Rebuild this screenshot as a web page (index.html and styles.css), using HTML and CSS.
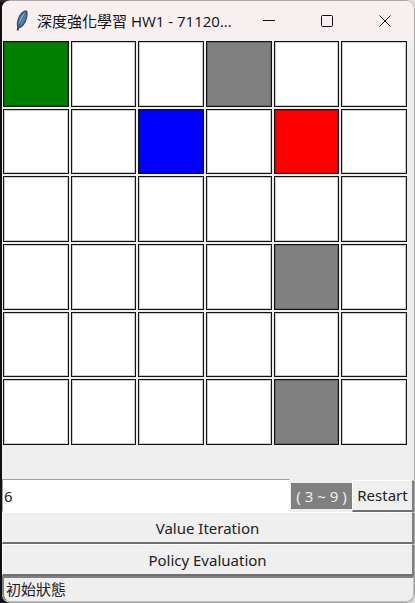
FILE: index.html
```html
<!DOCTYPE html>
<html lang="zh-Hant">
<head>
<meta charset="utf-8">
<title>深度強化學習 HW1</title>
<link rel="stylesheet" href="styles.css">
</head>
<body>
<main class="window">
  <header class="titlebar">
    <svg class="feather" viewBox="0 0 14 22" aria-hidden="true">
      <path d="M2.500 20.500 4 15" fill="none" stroke="#222" stroke-width="1.600"/>
      <path d="M3 17.500C1.500 13 3.500 7 6.500 3.500 8.500 1.500 10.500 .8 11.500 1.200c1 2 .4 7-1.700 11C8 15.500 5.500 18 3 17.500z" fill="#4482c6" stroke="#4a4c50" stroke-width="1.400"/>
      <path d="M4 13.500C4.500 9 7 5 10.500 2.200 9.500 6 7.500 10 5 14z" fill="#7db4ea"/>
      <path d="M3.500 17C5 12.500 8 7 11 2.500" fill="none" stroke="#274567" stroke-width=".7"/>
    </svg>
    <h1 class="title">深度強化學習 HW1 - 71120...</h1>
    <button class="control" type="button" aria-label="Minimize">
      <svg viewBox="0 0 12 12"><path d="M0 5.500h12"/></svg>
    </button>
    <button class="control" type="button" aria-label="Maximize">
      <svg viewBox="0 0 12 12"><rect x=".5" y=".5" width="11" height="11" rx="1"/></svg>
    </button>
    <button class="control" type="button" aria-label="Close">
      <svg viewBox="0 0 12 12"><path d="M.5.5l11 11M11.500.5l-11 11"/></svg>
    </button>
  </header>
  <section class="board">
    <i class="cell start"></i><i class="cell"></i><i class="cell"></i><i class="cell wall"></i><i class="cell"></i><i class="cell"></i>
    <i class="cell"></i><i class="cell"></i><i class="cell agent"></i><i class="cell"></i><i class="cell goal"></i><i class="cell"></i>
    <i class="cell"></i><i class="cell"></i><i class="cell"></i><i class="cell"></i><i class="cell"></i><i class="cell"></i>
    <i class="cell"></i><i class="cell"></i><i class="cell"></i><i class="cell"></i><i class="cell wall"></i><i class="cell"></i>
    <i class="cell"></i><i class="cell"></i><i class="cell"></i><i class="cell"></i><i class="cell"></i><i class="cell"></i>
    <i class="cell"></i><i class="cell"></i><i class="cell"></i><i class="cell"></i><i class="cell wall"></i><i class="cell"></i>
  </section>
  <form class="panel">
    <div class="size-row">
      <input class="size" id="size" type="text" value="6">
      <label class="range" for="size">( 3 ~ 9 )</label>
      <button class="btn restart" type="button">Restart</button>
    </div>
    <button class="btn" type="button">Value Iteration</button>
    <button class="btn" type="button">Policy Evaluation</button>
  </form>
  <footer class="status">初始狀態</footer>
</main>
</body>
</html>
```
FILE: styles.css
```css
* {
  box-sizing: border-box;
}

body {
  margin: 0;
  min-height: 100vh;
  padding: 1px 1px 1px 2px;
  display: flex;
  background:
    linear-gradient(#2b2b2b, #2b2b2b) 0 0 / 74px 2px no-repeat,
    linear-gradient(#101010, #101010) 0 0 / 10px 100% no-repeat,
    #dededa;
  font-family: "Noto Sans", "Noto Sans CJK TC", sans-serif;
  font-size: 15px;
  color: #222;
}

.window {
  flex: 1;
  display: flex;
  flex-direction: column;
  background: #efefef;
  border-radius: 8px;
  box-shadow: 0 0 0 1px #a8a8a8;
  clip-path: inset(-1px -1px -1px 0 round 8px);
  overflow: hidden;
}

.titlebar {
  display: flex;
  align-items: center;
  height: 40px;
  padding-left: 13px;
  background: #f8f0f0;
}

.feather {
  width: 14px;
  height: 22px;
  margin-right: 8px;
}

.title {
  flex: 1;
  margin: 0;
  font-family: "Open Sans", "Noto Sans CJK TC", sans-serif;
  font-size: 15px;
  font-weight: 400;
  line-height: 20px;
  white-space: nowrap;
  color: #111;
}

.control {
  width: 58px;
  height: 40px;
  padding: 0;
  border: 0;
  background: none;
}

.control svg {
  display: block;
  width: 12px;
  height: 12px;
  margin: auto;
  fill: none;
  stroke: #111;
  stroke-width: 1;
}

.board {
  display: grid;
  grid-template-columns: repeat(6, 1fr);
  gap: 2px;
  padding: 0 7px 0 1px;
}

.cell {
  aspect-ratio: 1;
  border: 1px solid #111;
  background: #fff;
  box-shadow: inset 0 0 0 1px #0003;
}

.start { background: #008000; }
.wall { background: #808080; }
.agent { background: #00f; }
.goal { background: #f00; }

.panel {
  display: flex;
  flex-direction: column;
  margin-top: auto;
}

.size-row {
  display: flex;
  align-items: center;
  height: 33px;
}

.size {
  flex: 1;
  min-width: 0;
  height: 33px;
  padding: 0 1px;
  border: 1px solid #fff;
  border-top-color: #a0a0a0;
  border-left-color: #a0a0a0;
  background: #fff;
  font: inherit;
  color: inherit;
}

.range {
  width: 61px;
  margin-left: 1px;
  background: #808080;
  color: #efefef;
  line-height: 26px;
  text-align: center;
  white-space: nowrap;
}

.btn {
  height: 32px;
  padding: 0;
  border: solid;
  border-width: 1px 2px 2px 1px;
  border-color: #fff #808080 #707070 #fff;
  background: #efefef;
  font: inherit;
  color: inherit;
}

.restart {
  width: 62px;
}

.status {
  height: 26px;
  padding: 0 2px;
  border: 1px solid #bbb;
  border-top: 2px solid #808080;
  border-left: 2px solid #808080;
  border-radius: 0 0 8px 8px;
  line-height: 22px;
}
```
